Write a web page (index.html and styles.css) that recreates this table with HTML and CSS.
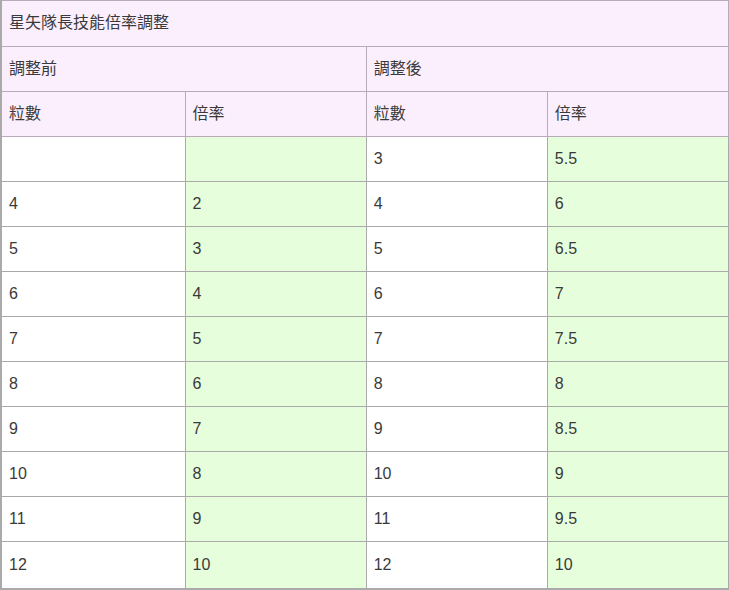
FILE: index.html
```html
<!DOCTYPE html>
<html>
<head>
<meta charset="utf-8">
<link rel="stylesheet" href="styles.css">
</head>
<body>
<table class="tbl">
  <colgroup><col class="c1"><col class="c2"><col class="c3"><col class="c4"></colgroup>
  <tr class="hd"><td colspan="4">星矢隊長技能倍率調整</td></tr>
  <tr class="hd"><td colspan="2">調整前</td><td colspan="2">調整後</td></tr>
  <tr class="hd"><td>粒數</td><td>倍率</td><td>粒數</td><td>倍率</td></tr>
  <tr><td></td><td class="g"></td><td>3</td><td class="g">5.5</td></tr>
  <tr><td>4</td><td class="g">2</td><td>4</td><td class="g">6</td></tr>
  <tr><td>5</td><td class="g">3</td><td>5</td><td class="g">6.5</td></tr>
  <tr><td>6</td><td class="g">4</td><td>6</td><td class="g">7</td></tr>
  <tr><td>7</td><td class="g">5</td><td>7</td><td class="g">7.5</td></tr>
  <tr><td>8</td><td class="g">6</td><td>8</td><td class="g">8</td></tr>
  <tr><td>9</td><td class="g">7</td><td>9</td><td class="g">8.5</td></tr>
  <tr><td>10</td><td class="g">8</td><td>10</td><td class="g">9</td></tr>
  <tr><td>11</td><td class="g">9</td><td>11</td><td class="g">9.5</td></tr>
  <tr class="last"><td>12</td><td class="g">10</td><td>12</td><td class="g">10</td></tr>
</table>
</body>
</html>
```
FILE: styles.css
```css
html, body { margin: 0; padding: 0; background: #ffffff; }
.tbl {
  border-collapse: collapse;
  width: 729px;
  table-layout: fixed;
  font-family: "Liberation Sans", "Noto Sans CJK TC", sans-serif;
  font-size: 16px;
  color: #3a3a3a;
  border-left: 2px solid #aaaaaa;
  border-right: 1px solid #aaaaaa;
  border-bottom: 2px solid #aaaaaa;
  border-top: 1px solid #aaaaaa;
}
.c1 { width: 184px; }
.c2 { width: 181px; }
.c3 { width: 181px; }
.c4 { width: 181px; }
.tbl td {
  height: 45px;
  padding: 0 0 0 7px;
  border: 1px solid #aaaaaa;
  vertical-align: middle;
  box-sizing: border-box;
}
.tbl tr:first-child td { height: 46px; }
.tbl tr.last td { height: 47px; }
.hd td {
  background: #fbeffd;
  border-color: #b9a9bb;
  padding-bottom: 5px;
}
.tbl td.g { background: #e7fedc; }
```
